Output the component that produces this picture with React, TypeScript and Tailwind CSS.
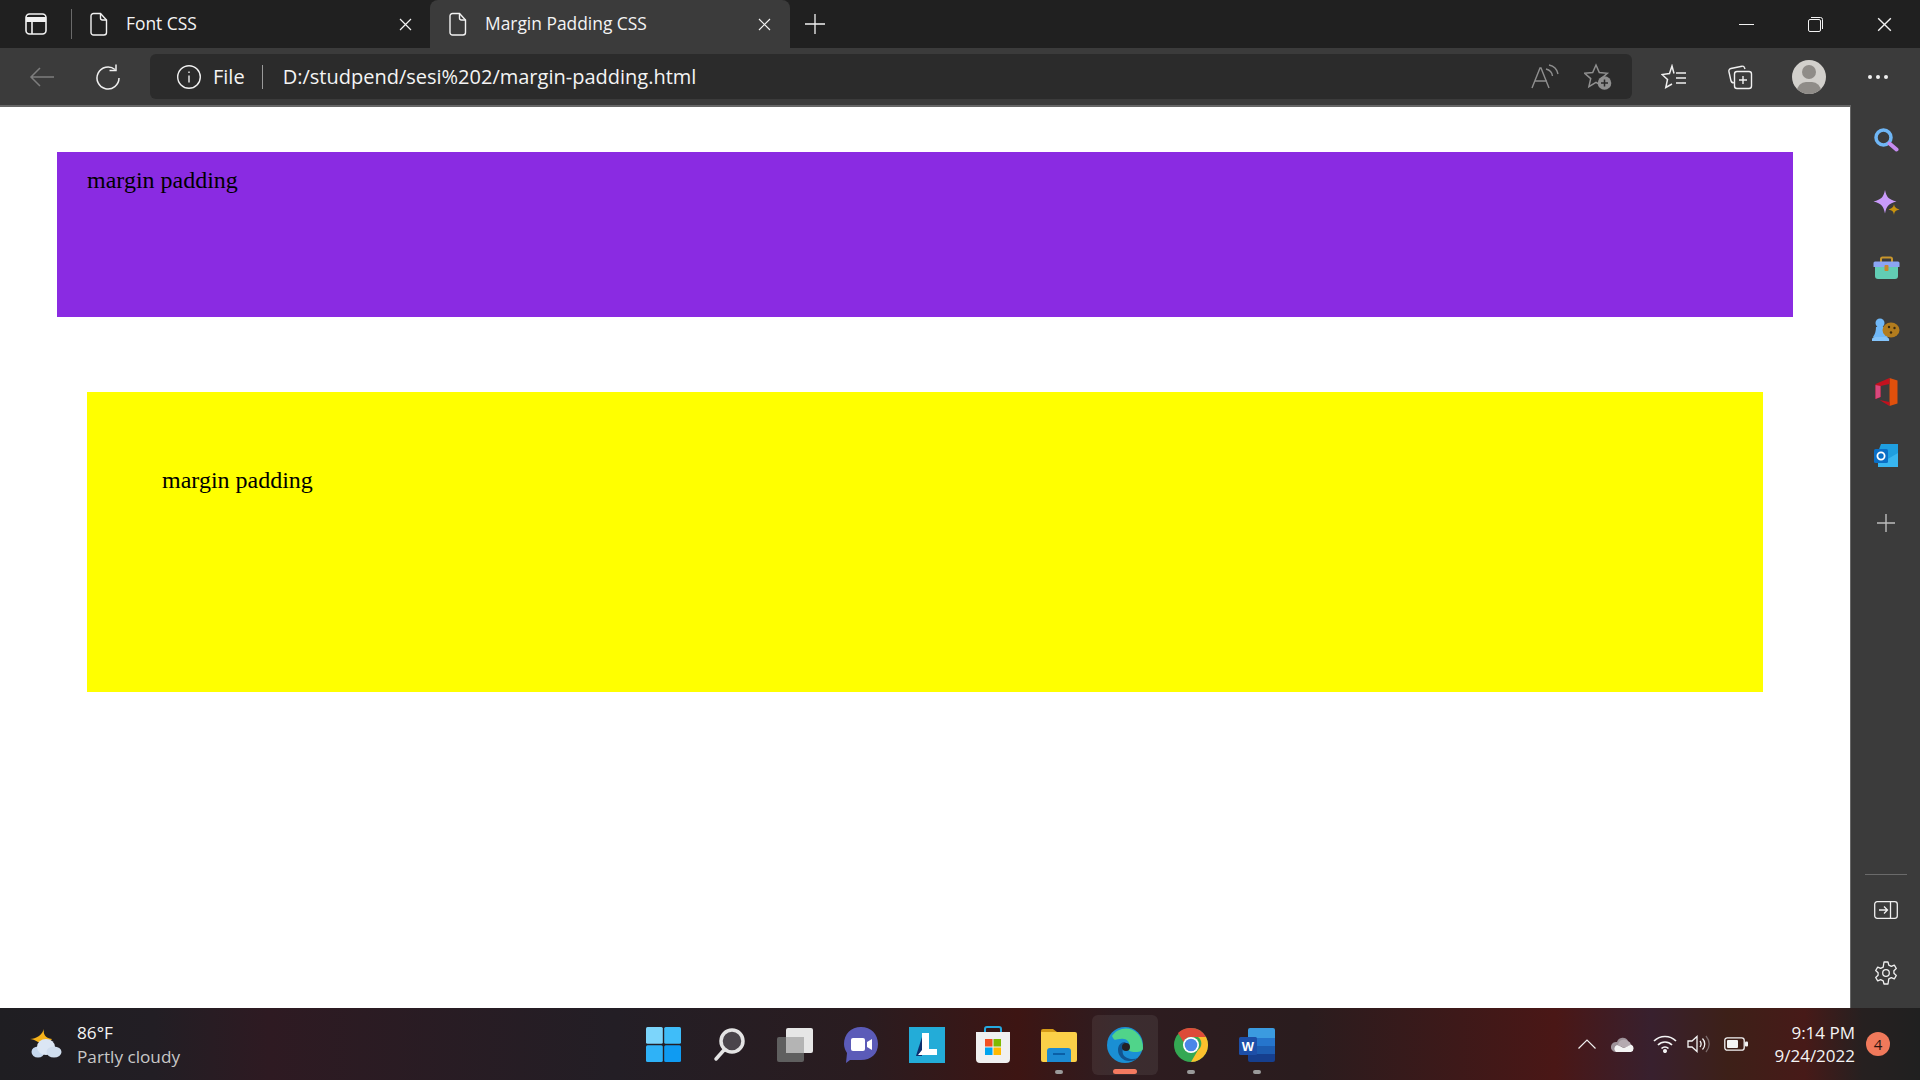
import type { ReactNode } from 'react'

function DocIcon() {
  return (
    <svg width="18" height="24" viewBox="0 0 18 24" fill="none" stroke="#f2f2f2" strokeWidth="1.4">
      <path d="M3.500 1.500h7l6 6.500v12.500a2.500 2.500 0 0 1-2.500 2.500h-10.500a2.500 2.500 0 0 1-2.500-2.500v-16.500a2.500 2.500 0 0 1 2.500-2.500z" />
      <path d="M10.500 1.500v4.500a2 2 0 0 0 2 2h4" />
    </svg>
  )
}

function CloseIcon({ size = 13 }: { size?: number }) {
  return (
    <svg width={size} height={size} viewBox="0 0 13 13" stroke="#f2f2f2" strokeWidth="1.2">
      <path d="M1 1l11 11M12 1L1 12" />
    </svg>
  )
}

function Tab({ title, active, close }: { title: string; active?: boolean; close: string }) {
  return (
    <div className={`h-12 flex items-center relative ${active ? 'w-[360px] bg-[#3b3b3b] rounded-t-lg pl-[19px]' : 'w-[349px] pl-[9px]'}`}>
      <DocIcon />
      <span className={`text-[17.4px] text-[#f4f4f4] pb-[2px] ${active ? 'ml-[18px]' : 'ml-[18px]'}`}>{title}</span>
      <span className={`absolute top-[18px] ${close}`}><CloseIcon /></span>
    </div>
  )
}

function TopBar() {
  return (
    <div className="h-12 bg-[#202020] flex items-center">
      <div className="w-[71px] flex items-center pl-[25px]">
        <svg width="22" height="22" viewBox="0 0 22 22" fill="none" stroke="#f2f2f2" strokeWidth="1.6">
          <rect x="1" y="1" width="20" height="20" rx="3.500" />
          <path d="M1 6.500h20" strokeWidth="5" />
          <path d="M7 7v14" />
        </svg>
      </div>
      <div className="w-px h-[30px] bg-[#6a6a6a]" />
      <div className="w-[9px] shrink-0" />
      <Tab title="Font CSS" close="left-[318px]" />
      <Tab title="Margin Padding CSS" active close="left-[328px]" />
      <svg className="ml-[15px]" width="20" height="20" viewBox="0 0 20 20" stroke="#f2f2f2" strokeWidth="1.3">
        <path d="M10 0v20M0 10h20" />
      </svg>
      <div className="ml-auto flex items-center">
        <div className="w-[69px] flex justify-center">
          <div className="w-[15px] h-px bg-[#f2f2f2]" />
        </div>
        <div className="w-[69px] flex justify-center">
          <svg width="15" height="15" viewBox="0 0 15 15" fill="none" stroke="#f2f2f2" strokeWidth="1">
            <rect x="0.500" y="2.500" width="12" height="12" rx="1.500" />
            <path d="M3 0.500h9.500a2 2 0 0 1 2 2v9.500" />
          </svg>
        </div>
        <div className="w-[70px] flex justify-center pr-[1px]">
          <CloseIcon size={15} />
        </div>
      </div>
    </div>
  )
}

function ToolBar() {
  return (
    <div className="h-[57px] bg-[#3b3b3b] flex items-center">
      <div className="w-[84px] flex justify-center">
        <svg width="26" height="24" viewBox="0 0 26 24" fill="none" stroke="#7d7d7d" strokeWidth="1.5">
          <path d="M25 12H2M11 3l-9 9 9 9" />
        </svg>
      </div>
      <div className="w-[66px] flex justify-center -translate-x-[9px]">
        <svg width="26" height="26" viewBox="0 0 26 26" fill="none" stroke="#f0f0f0" strokeWidth="1.5">
          <path d="M20 5.500a11 11 0 1 0 4 8.500" />
          <path d="M21 0.500v6h-6.500" />
        </svg>
      </div>
      <div className="w-[1482px] h-[45px] rounded-md bg-[#2b2b2b] flex items-center relative">
        <svg className="ml-[26px]" width="26" height="26" viewBox="0 0 26 26" fill="none" stroke="#f0f0f0" strokeWidth="1.4">
          <circle cx="13" cy="13" r="11.300" />
          <path d="M13 11.500v7M13 7.500v1.600" />
        </svg>
        <span className="ml-[11px] text-[20px] text-[#f4f4f4]">File</span>
        <div className="ml-[17px] w-px h-[24px] bg-[#9a9a9a]" />
        <span className="ml-[20px] text-[20px] text-[#f4f4f4]">D:/studpend/sesi%202/margin-padding.html</span>
        <div className="ml-auto flex items-center gap-[24px] pr-[20px]">
          <svg width="30" height="26" viewBox="0 0 30 26" fill="none" stroke="#8f8f8f" strokeWidth="1.400">
            <path d="M2 24l8-20h1l8 20M5 17h12" />
            <path d="M16 5c4 1 6 3 6.500 7M19 1c5 1 8 4 9 9" />
          </svg>
          <svg width="28" height="28" viewBox="0 0 28 28" fill="none">
            <path d="M12 2l3.300 7.500 8 .8-6 5.300 1.800 8-7.100-4.200-7.100 4.200 1.800-8-6-5.300 8-.8z" stroke="#8f8f8f" strokeWidth="1.500" />
            <circle cx="20.500" cy="20" r="6.800" fill="#8f8f8f" />
            <path d="M20.500 16.500v7M17 20h7" stroke="#2b2b2b" strokeWidth="1.500" />
          </svg>
        </div>
      </div>
      <div className="ml-[9px] flex items-center">
        <div className="w-[66px] flex justify-center">
          <svg width="26" height="26" viewBox="0 0 26 26" fill="none" stroke="#f0f0f0" strokeWidth="1.500">
            <path d="M13 9.500L11 2 8.500 9.500l-7.500 1 5.500 5-1.700 8L11 20" />
            <path d="M15 9h10M15 14h10M15 19h10" />
          </svg>
        </div>
        <div className="w-[66px] flex justify-center">
          <svg width="26" height="26" viewBox="0 0 26 26" fill="none" stroke="#f0f0f0" strokeWidth="1.400">
            <rect x="7.500" y="7.500" width="17" height="17" rx="2.500" />
            <path d="M16 12v8M12 16h8" />
            <path d="M18 5l-.6-1.500a2 2 0 0 0-2.500-1.200l-11 2.200a2.500 2.500 0 0 0-2 3l2 9a3 3 0 0 0 3 2.300" />
          </svg>
        </div>
        <div className="w-[34px] h-[34px] rounded-full bg-[#d2d0cc] overflow-hidden relative ml-[19px]">
          <div className="absolute left-[10px] top-[5px] w-[14px] h-[14px] rounded-full bg-[#8f8c88]" />
          <div className="absolute left-[5px] top-[22px] w-[24px] h-[18px] rounded-full bg-[#8f8c88]" />
        </div>
        <div className="ml-[42px] flex gap-[4px]">
          <div className="w-[4px] h-[4px] rounded-full bg-[#f0f0f0]" />
          <div className="w-[4px] h-[4px] rounded-full bg-[#f0f0f0]" />
          <div className="w-[4px] h-[4px] rounded-full bg-[#f0f0f0]" />
        </div>
      </div>
    </div>
  )
}

function SideSlot({ h, children }: { h: string; children: ReactNode }) {
  return <div className={`flex items-center justify-center ${h}`}>{children}</div>
}

function SideBar() {
  return (
    <div className="w-[69px] bg-[#3b3b3b] flex flex-col pl-[1px]">
      <SideSlot h="h-[60px] mt-[5px]">
        <svg width="26" height="26" viewBox="0 0 26 26" fill="none">
          <circle cx="10.500" cy="10.500" r="7.500" stroke="#6fb6f5" strokeWidth="3.500" />
          <path d="M16.500 16.500l7 6" stroke="#c58cf0" strokeWidth="4" strokeLinecap="round" />
        </svg>
      </SideSlot>
      <SideSlot h="h-[65px]">
        <svg width="27" height="26" viewBox="0 0 27 26" fill="none">
          <path d="M12 0c1.500 7 3.500 9.500 11.500 11.500-8 2-10 4.500-11.500 12-1.500-7.500-3.500-10-11.500-12C8.500 9.500 10.500 7 12 0z" fill="#c99bfa" />
          <path d="M21 14c.5 3 1.500 4 5.500 5.500-4 1-5 2-5.500 5.500-.5-3.500-1.500-4.500-5.500-5.500 4-1.500 5-2.500 5.500-5.500z" fill="#c8920e" />
        </svg>
      </SideSlot>
      <SideSlot h="h-[65px]">
        <svg width="27" height="24" viewBox="0 0 27 24" fill="none">
          <path d="M8 6V3a1.500 1.500 0 0 1 1.500-1.500h8A1.500 1.500 0 0 1 19 3v3" stroke="#c8962c" strokeWidth="2" />
          <path d="M2 10h23v10a3 3 0 0 1-3 3H5a3 3 0 0 1-3-3z" fill="#62cdb4" />
          <path d="M0.500 7a1.500 1.500 0 0 1 1.500-1.500h23a1.500 1.500 0 0 1 1.500 1.500v4H.5z" fill="#8ba5f4" />
          <rect x="11.500" y="9" width="4" height="6" rx="1" fill="#c8862c" />
        </svg>
      </SideSlot>
      <SideSlot h="h-[60px]">
        <svg width="28" height="24" viewBox="0 0 28 24" fill="none">
          <circle cx="8" cy="5" r="4.500" fill="#70b8f8" />
          <path d="M4 9h8c0 4 1 7 4 10H1c2-3 3-6 3-10z" fill="#70b8f8" />
          <path d="M0 23a3 3 0 0 1 3-4h11a3 3 0 0 1 3 4z" fill="#84c4fb" />
          <ellipse cx="19" cy="12" rx="8.500" ry="7.500" fill="#b27c1e" />
          <circle cx="17" cy="9" r="1.200" fill="#3a2a10" />
          <circle cx="22.500" cy="10" r="1.200" fill="#3a2a10" />
          <circle cx="19" cy="14.500" r="1.200" fill="#3a2a10" />
        </svg>
      </SideSlot>
      <SideSlot h="h-[64px]">
        <svg width="25" height="28" viewBox="0 0 24 28" fill="none">
          <path d="M15 0l8 2.500v23L15 28z" fill="#e0500c" />
          <path d="M15 0L1 6v15l5-2V8l9-2z" fill="#c3111e" />
          <path d="M1 7l5 1v11l-5 2z" fill="#d9487e" />
          <path d="M5 22l10 6v-4z" fill="#c3111e" />
        </svg>
      </SideSlot>
      <SideSlot h="h-[63px]">
        <svg width="25" height="24" viewBox="0 0 25 24" fill="none">
          <path d="M7 0h17v23H4V8z" fill="#1f9fe0" />
          <path d="M24 9l-12 7-8-4v11h20z" fill="#38b6f0" />
          <rect x="0" y="5" width="14" height="14" rx="1.500" fill="#0a6fc6" />
          <circle cx="7" cy="12" r="3.600" stroke="#ffffff" strokeWidth="1.800" />
        </svg>
      </SideSlot>
      <SideSlot h="h-[71px]">
        <svg width="18" height="18" viewBox="0 0 18 18" stroke="#bdbdbd" strokeWidth="1.400">
          <path d="M9 0v18M0 9h18" />
        </svg>
      </SideSlot>
      <div className="mt-auto mx-auto w-[42px] h-px bg-[#6a6a6a]" />
      <SideSlot h="h-[69px]">
        <svg width="24" height="18" viewBox="0 0 24 18" fill="none" stroke="#f0f0f0" strokeWidth="1.300">
          <rect x="0.700" y="0.700" width="22.600" height="16.600" rx="2.500" />
          <path d="M16.500 1v16M5 9h8M10 5.500L13.500 9 10 12.500" />
        </svg>
      </SideSlot>
      <SideSlot h="h-[58px] mb-[6px]">
        <svg width="24" height="24" viewBox="0 0 24 24" fill="none" stroke="#f0f0f0" strokeWidth="1.300" strokeLinejoin="round">
          <circle cx="12" cy="12" r="3.300" />
          <path d="M10 1h4l.8 3.200 2.500 1.200 3-1.300 2 3.400-2.400 2.200v2.600l2.400 2.200-2 3.400-3-1.300-2.500 1.200L14 23h-4l-.8-3.200-2.500-1.200-3 1.300-2-3.400 2.400-2.200V11.700L1.700 9.500l2-3.400 3 1.300 2.500-1.200z" />
        </svg>
      </SideSlot>
    </div>
  )
}

function PageContent() {
  return (
    <div className="flex-1 bg-white border-t-2 border-r border-[#666666] font-['Liberation_Serif',serif] text-[24px] leading-[27px] text-black">
      <div className="mt-[45px] ml-[57px] mr-[57px] h-[165px] bg-[#8a2be2] pl-[30px] pt-[15px]">margin padding</div>
      <div className="mt-[75px] ml-[87px] mr-[87px] h-[300px] bg-[#ffff00] pl-[75px] pt-[75px]">margin padding</div>
    </div>
  )
}

function TaskSlot({ children, dot, active }: { children: ReactNode; dot?: boolean; active?: boolean }) {
  return (
    <div className={`w-[66px] h-[60px] flex items-center justify-center relative rounded-md ${active ? 'bg-[#ffffff12]' : ''}`}>
      {children}
      {dot && <div className="absolute bottom-[1px] left-[29px] w-[8px] h-[4px] rounded-full bg-[#9a9a9a]" />}
      {active && <div className="absolute bottom-[1px] left-[21px] w-[24px] h-[5px] rounded-full bg-[#f47a60]" />}
    </div>
  )
}

function TaskBar() {
  return (
    <div className="h-[72px] flex items-center bg-[linear-gradient(90deg,#1f1e22_0%,#221e24_8%,#2e1a22_14%,#231e25_32%,#2a1c20_45%,#3d1513_53%,#2e1c20_58%,#2a1c1e_68%,#4a1716_81%,#38202e_86%,#3d2018_90%,#471a18_94%,#262020_97%,#202020_100%)] shrink-0">
      <div className="w-[630px] flex items-center pl-[30px]">
        <svg width="32" height="30" viewBox="0 0 32 30" fill="none">
          <path d="M14 0c-1 5 1 9 8 10-3 5-9 6-14 3-3-2-6-3-8-3 3 0 6-1 9-3 3-2 4-5 5-7z" fill="#f5b21a" />
          <ellipse cx="8" cy="23" rx="6.500" ry="5.500" fill="#c6d8ee" />
          <ellipse cx="16" cy="18" rx="9" ry="8" fill="#dbe6f4" />
          <ellipse cx="24" cy="23" rx="7.500" ry="5.500" fill="#cfddee" />
        </svg>
        <div className="ml-[15px] flex flex-col leading-[24px] pt-[2px] font-['Open_Sans',sans-serif]">
          <span className="text-[#f4f4f4] text-[17.2px]">86°F</span>
          <span className="text-[#c8c8c8] text-[17.2px]">Partly cloudy</span>
        </div>
      </div>
      <div className="flex items-center pt-[1px]">
        <TaskSlot>
          <svg width="35" height="35" viewBox="0 0 35 35">
            <rect x="0" y="0" width="16.800" height="16.800" rx="1.500" fill="#7cd5fb" />
            <rect x="18.200" y="0" width="16.800" height="16.800" rx="1.500" fill="#3fbdf9" />
            <rect x="0" y="18.200" width="16.800" height="16.800" rx="1.500" fill="#2fb2f7" />
            <rect x="18.200" y="18.200" width="16.800" height="16.800" rx="1.500" fill="#0f9bf2" />
          </svg>
        </TaskSlot>
        <TaskSlot>
          <svg width="32" height="34" viewBox="0 0 32 34" fill="none">
            <circle cx="19" cy="13" r="11" fill="#4a454b" stroke="#e4e4e4" strokeWidth="3.500" />
            <path d="M11 22l-8 9" stroke="#e4e4e4" strokeWidth="3.500" strokeLinecap="round" />
          </svg>
        </TaskSlot>
        <TaskSlot>
          <svg width="36" height="34" viewBox="0 0 36 34">
            <rect x="9" y="0" width="27" height="25" rx="2" fill="#e6e6e6" />
            <rect x="0" y="9" width="27" height="25" rx="2" fill="#5f5f5f" />
            <rect x="9" y="9" width="18" height="16" fill="#b4b4b4" />
          </svg>
        </TaskSlot>
        <TaskSlot>
          <svg width="34" height="36" viewBox="0 0 34 36">
            <path d="M17 0c10 0 17 7 17 17s-7 16-17 16H6l-4 3 1-10C1 23 0 20 0 17 0 7 7 0 17 0z" fill="#5b5bb8" />
            <rect x="7" y="11" width="14" height="13" rx="2" fill="#ffffff" />
            <path d="M23 15l5-3v11l-5-3z" fill="#ffffff" />
          </svg>
        </TaskSlot>
        <TaskSlot>
          <svg width="36" height="36" viewBox="0 0 36 36">
            <rect width="36" height="36" fill="#23acd8" />
            <path d="M13 10L7 29h6z" fill="#0c2f6e" />
            <path d="M13 6h7v16h8v6H9l4-5z" fill="#ffffff" />
          </svg>
        </TaskSlot>
        <TaskSlot>
          <svg width="36" height="38" viewBox="0 0 36 38">
            <path d="M10 6V3a2 2 0 0 1 2-2h12a2 2 0 0 1 2 2v3" fill="none" stroke="#25a9e0" strokeWidth="2" />
            <path d="M1 6h34v27a4 4 0 0 1-4 4H5a4 4 0 0 1-4-4z" fill="#f0f0f0" />
            <rect x="10" y="13" width="7.500" height="7.500" fill="#f25022" />
            <rect x="18.500" y="13" width="7.500" height="7.500" fill="#7fba00" />
            <rect x="10" y="21.500" width="7.500" height="7.500" fill="#00a4ef" />
            <rect x="18.500" y="21.500" width="7.500" height="7.500" fill="#ffb900" />
          </svg>
        </TaskSlot>
        <TaskSlot dot>
          <svg width="36" height="34" viewBox="0 0 36 34">
            <path d="M0 3a2 2 0 0 1 2-2h10l4 3h-16z" fill="#d49a16" />
            <path d="M0 4h34a2 2 0 0 1 2 2v26a2 2 0 0 1-2 2H2a2 2 0 0 1-2-2z" fill="#fbd048" />
            <path d="M6 34V23a3 3 0 0 1 3-3h18a3 3 0 0 1 3 3v11z" fill="#1c8ad2" />
            <rect x="12" y="25" width="12" height="2" fill="#0a5fa6" />
          </svg>
        </TaskSlot>
        <TaskSlot active>
          <svg width="36" height="36" viewBox="0 0 36 36">
            <circle cx="18" cy="18" r="18" fill="#1a8fd4" />
            <path d="M5 9c5-8 18-11 26-2 4 5 5 10 5 14 0 3-3 4-7 4-3 0-8 0-8-4 2-2 2-8-4-9-8-1-9 4-12-3z" fill="#50d48a" />
            <path d="M18 15c-4 0-7 3-7 8 0 6 5 11 11 11 4 0 7-1 9-3-5 2-13 1-15-4-1-4 0-8 4-10z" fill="#11548f" />
            <circle cx="19" cy="20" r="4" fill="#252024" />
          </svg>
        </TaskSlot>
        <TaskSlot dot>
          <svg width="34" height="34" viewBox="0 0 34 34">
            <circle cx="17" cy="17" r="17" fill="#34a853" />
            <path d="M17 0a17 17 0 0 1 15 9H17a8 8 0 0 0-7.500 5L4 5a17 17 0 0 1 13-5z" fill="#dd4b39" />
            <path d="M32 9a17 17 0 0 1-15 25l7-12a8 8 0 0 0 0-13z" fill="#fbc02d" />
            <circle cx="17" cy="17" r="8" fill="#ffffff" />
            <circle cx="17" cy="17" r="6.300" fill="#4a86e8" />
          </svg>
        </TaskSlot>
        <TaskSlot dot>
          <svg width="36" height="34" viewBox="0 0 36 34">
            <path d="M9 2a2 2 0 0 1 2-2h23a2 2 0 0 1 2 2v8H9z" fill="#3b9be0" />
            <rect x="9" y="10" width="27" height="8" fill="#2675cc" />
            <rect x="9" y="18" width="27" height="8" fill="#1d5cb0" />
            <path d="M9 26h27v6a2 2 0 0 1-2 2H11a2 2 0 0 1-2-2z" fill="#163f8e" />
            <rect x="0" y="9" width="18" height="18" rx="1.500" fill="#1d4fa8" />
            <text x="9" y="23" textAnchor="middle" fontSize="13" fontWeight="700" fill="#ffffff" fontFamily="Liberation Sans, sans-serif">W</text>
          </svg>
        </TaskSlot>
      </div>
      <div className="ml-auto flex items-center relative">
        <svg width="18" height="10" viewBox="0 0 18 10" fill="none" stroke="#f0f0f0" strokeWidth="1.200">
          <path d="M0.500 9.500L9 1l8.500 8.500" />
        </svg>
        <svg className="ml-[15px]" width="24" height="15" viewBox="0 0 24 15">
          <path d="M6 5a6 6 0 0 1 11-1c-1 .5-7 5-12 11H4a4 4 0 0 1 2-10z" fill="#9d9299" />
          <path d="M17 4a5 5 0 0 1 3 4l-7 3-6-3a6 6 0 0 1 10-4z" fill="#b5aab0" />
          <path d="M5 15H20a4 4 0 0 0 0-7.500L13 11 6 8a4 4 0 0 0-1 7z" fill="#f4f4f4" />
        </svg>
        <svg className="ml-[18px]" width="24" height="18" viewBox="0 0 24 18" fill="none" stroke="#f4f4f4" strokeWidth="1.700">
          <path d="M1 6c6-6 16-6 22 0M5 10c4-4 10-4 14 0M8.500 13.500c2-2 5-2 7 0" />
          <circle cx="12" cy="16" r="1.200" fill="#f4f4f4" />
        </svg>
        <svg className="ml-[10px]" width="24" height="20" viewBox="0 0 24 20" fill="none" stroke="#f4f4f4" strokeWidth="1.300">
          <path d="M1 7v6h4l5 4.500v-15L5 7z" />
          <path d="M13 7c1.500 2 1.500 4 0 6M15.500 4.500c3 3 3 8 0 11" />
          <path d="M19 2c4 5 4 11 0 16" stroke="#7a6a6a" />
        </svg>
        <svg className="ml-[13px]" width="24" height="14" viewBox="0 0 24 14" fill="none">
          <rect x="0.800" y="0.800" width="19.400" height="12.400" rx="2.500" stroke="#f4f4f4" strokeWidth="1.300" />
          <rect x="3" y="3" width="11" height="8" rx="1" fill="#f4f4f4" />
          <rect x="21" y="4.500" width="3" height="5" rx="1" fill="#f4f4f4" />
        </svg>
        <div className="ml-[22px] w-[85px] flex flex-col items-end text-[17px] leading-[23px] text-[#f4f4f4] font-['Open_Sans',sans-serif] whitespace-nowrap">
          <span>9:14 PM</span>
          <span>9/24/2022</span>
        </div>
        <div className="ml-[11px] mr-[30px] w-[24px] h-[24px] rounded-full bg-[#f0795b] flex items-center justify-center text-[15px] text-[#2a1410] font-['Open_Sans',sans-serif]">4</div>
      </div>
    </div>
  )
}

export default function App() {
  return (
    <div className="w-[1920px] h-screen overflow-hidden flex flex-col font-['Open_Sans',sans-serif]">
      <TopBar />
      <ToolBar />
      <div className="flex-1 flex min-h-0">
        <PageContent />
        <SideBar />
      </div>
      <TaskBar />
    </div>
  )
}
